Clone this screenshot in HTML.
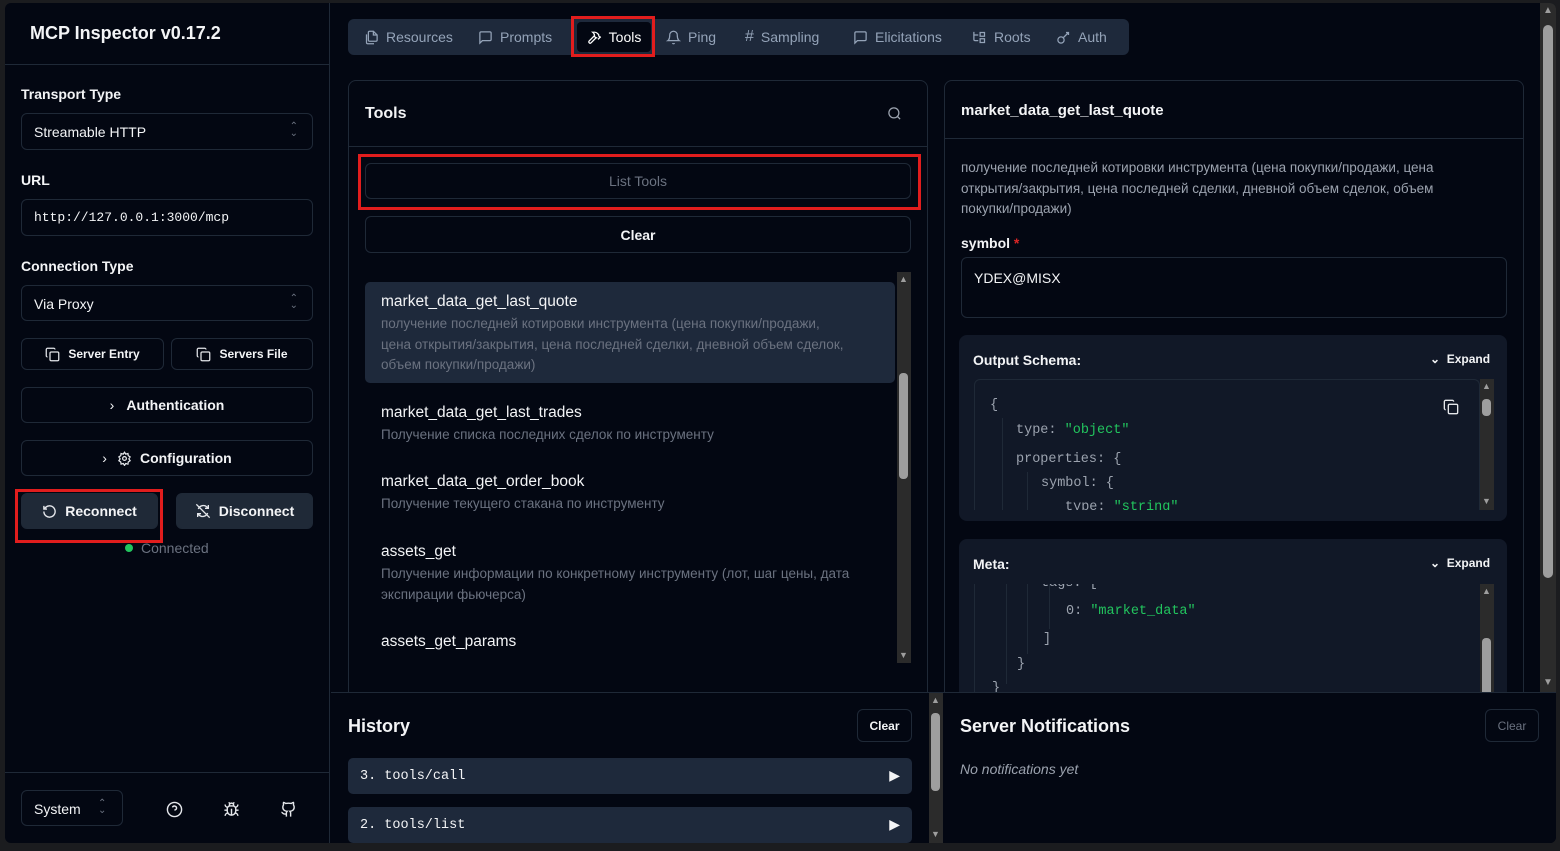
<!DOCTYPE html>
<html><head><meta charset="utf-8"><style>
*{box-sizing:border-box;margin:0;padding:0}
body{width:1560px;height:851px;background:#1b1c1f;font-family:"Liberation Sans","Noto Sans CJK SC",sans-serif;color:#f3f4f6;position:relative;overflow:hidden}
.a{position:absolute}
.app{position:absolute;left:5px;top:3px;width:1551px;height:840px;background:#030712;border-radius:6px;overflow:hidden}
.lbl{font-size:14px;font-weight:bold;color:#f3f4f6}
.box{border:1px solid #1f2937;border-radius:6px}
.btn{border:1px solid #1f2937;border-radius:6px;display:flex;align-items:center;justify-content:center;font-size:13px;font-weight:bold;gap:8px}
.red{border:3px solid #e11d1d}
.mono{font-family:"Liberation Mono",monospace}
.muted{color:#6b7280}
svg{display:block}
.tab{display:flex;align-items:center;gap:7px;font-size:14px;color:#94a3b8;position:absolute;top:0;height:36px}
.tname{font-size:15.5px;color:#f3f4f6}
.tdesc{font-size:13.5px;color:#6b7280;line-height:20.5px;margin-top:3px}
.k{color:#9ca3af}.s{color:#22c55e}
</style></head><body>
<div class="app">
<!-- sidebar -->
<div class="a" style="left:0;top:0;width:325px;height:840px;border-right:1px solid #1f2937"></div>
<div class="a" style="left:25px;top:20px;font-size:18px;font-weight:bold">MCP Inspector v0.17.2</div>
<div class="a" style="left:0;top:61px;width:325px;height:1px;background:#1f2937"></div>
<div class="a lbl" style="left:16px;top:83px">Transport Type</div>
<div class="a box" style="left:16px;top:110px;width:292px;height:37px"><span class="a" style="left:12px;top:10px;font-size:14px">Streamable HTTP</span><span class="a" style="right:14px;top:9px;font-size:10px;color:#6b7280;line-height:7px">⌃<br>⌄</span></div>
<div class="a lbl" style="left:16px;top:169px">URL</div>
<div class="a box" style="left:16px;top:196px;width:292px;height:37px"><span class="a mono" style="left:12px;top:10px;font-size:13px">http://127.0.0.1:3000/mcp</span></div>
<div class="a lbl" style="left:16px;top:255px">Connection Type</div>
<div class="a box" style="left:16px;top:282px;width:292px;height:36px"><span class="a" style="left:12px;top:10px;font-size:14px">Via Proxy</span><span class="a" style="right:14px;top:9px;font-size:10px;color:#6b7280;line-height:7px">⌃<br>⌄</span></div>
<div class="a btn" style="left:16px;top:335px;width:143px;height:32px;font-size:12px"><svg width="15" height="15" viewBox="0 0 24 24" fill="none" stroke="#e5e7eb" stroke-width="2"><rect x="8" y="8" width="14" height="14" rx="2"/><path d="M4 16c-1 0-2-1-2-2V4c0-1 1-2 2-2h10c1 0 2 1 2 2"/></svg>Server Entry</div>
<div class="a btn" style="left:166px;top:335px;width:142px;height:32px;font-size:12px"><svg width="15" height="15" viewBox="0 0 24 24" fill="none" stroke="#e5e7eb" stroke-width="2"><rect x="8" y="8" width="14" height="14" rx="2"/><path d="M4 16c-1 0-2-1-2-2V4c0-1 1-2 2-2h10c1 0 2 1 2 2"/></svg>Servers File</div>
<div class="a btn" style="left:16px;top:384px;width:292px;height:36px;font-size:14px"><span style="font-weight:normal;margin-right:4px">›</span>Authentication</div>
<div class="a btn" style="left:16px;top:437px;width:292px;height:36px;font-size:14px"><span style="font-weight:normal;margin-right:2px">›</span><svg width="15" height="15" viewBox="0 0 24 24" fill="none" stroke="#e5e7eb" stroke-width="2"><circle cx="12" cy="12" r="3"/><path d="M12 2l2 3 3.5-1 .5 3.5 3 2-2 3 2 3-3 2-.5 3.5-3.5-1-2 3-2-3-3.5 1-.5-3.5-3-2 2-3-2-3 3-2 .5-3.5 3.5 1z"/></svg>Configuration</div>
<div class="a btn" style="left:16px;top:490px;width:137px;height:36px;background:#1f2937;border-color:#1f2937;font-size:14px"><svg width="15" height="15" viewBox="0 0 24 24" fill="none" stroke="#e5e7eb" stroke-width="2.2"><path d="M3 12a9 9 0 1 0 3-6.7L3 8"/><path d="M3 3v5h5"/></svg>Reconnect</div>
<div class="a red" style="left:10px;top:486px;width:148px;height:54px"></div>
<div class="a btn" style="left:171px;top:490px;width:137px;height:36px;background:#1f2937;border-color:#1f2937;font-size:14px"><svg width="16" height="16" viewBox="0 0 24 24" fill="none" stroke="#e5e7eb" stroke-width="2"><path d="M2 2l20 20M5 9a8 8 0 0 1 13-3l2 2M19 15a8 8 0 0 1-13 3l-2-2M20 3v5h-5M4 21v-5h5"/></svg>Disconnect</div>
<div class="a" style="left:120px;top:541px;width:8px;height:8px;border-radius:50%;background:#22c55e"></div>
<div class="a" style="left:136px;top:537px;font-size:14px;color:#6b7280">Connected</div>
<div class="a" style="left:0;top:769px;width:325px;height:1px;background:#1f2937"></div>
<div class="a box" style="left:16px;top:787px;width:102px;height:36px"><span class="a" style="left:12px;top:10px;font-size:14px">System</span><span class="a" style="left:76px;top:9px;font-size:10px;color:#6b7280;line-height:7px">⌃<br>⌄</span></div>
<svg class="a" style="left:161px;top:798px" width="17" height="17" viewBox="0 0 24 24" fill="none" stroke="#e5e7eb" stroke-width="2"><circle cx="12" cy="12" r="10"/><path d="M9.1 9a3 3 0 0 1 5.8 1c0 2-3 3-3 3M12 17h.01"/></svg>
<svg class="a" style="left:218px;top:798px" width="17" height="17" viewBox="0 0 24 24" fill="none" stroke="#e5e7eb" stroke-width="2"><path d="M8 2l1.9 1.9M16 2l-1.9 1.9M9 7.1V6a3 3 0 0 1 6 0v1.1"/><path d="M12 20c-3.3 0-6-2.7-6-6v-3a4 4 0 0 1 4-4h4a4 4 0 0 1 4 4v3c0 3.3-2.7 6-6 6zM12 20v-9M6.5 9C4.6 8.8 3 7.1 3 5M6 13H2M3 21c0-2.1 1.7-3.9 3.8-4M20.97 5c0 2.1-1.6 3.8-3.5 4M22 13h-4M17.2 17c2.1.1 3.8 1.9 3.8 4"/></svg>
<svg class="a" style="left:275px;top:798px" width="17" height="17" viewBox="0 0 24 24" fill="none" stroke="#e5e7eb" stroke-width="2"><path d="M15 22v-4a4.8 4.8 0 0 0-1-3.5c3 0 6-2 6-5.5.08-1.25-.27-2.48-1-3.5.28-1.15.28-2.35 0-3.5 0 0-1 0-3 1.5-2.64-.5-5.36-.5-8 0C6 2 5 2 5 2c-.3 1.15-.3 2.35 0 3.5A5.4 5.4 0 0 0 4 9c0 3.5 3 5.5 6 5.5-.39.49-.68 1.05-.85 1.65S8.93 17.38 9 18v4M9 18c-4.51 2-5-2-7-2"/></svg>

<!-- tabs -->
<div class="a" style="left:343px;top:16px;width:781px;height:36px;background:#1e293b;border-radius:6px">
 <div class="tab" style="left:16px"><svg width="15" height="15" viewBox="0 0 24 24" fill="none" stroke="#94a3b8" stroke-width="2"><path d="M15 2H9a2 2 0 0 0-2 2v12a2 2 0 0 0 2 2h10a2 2 0 0 0 2-2V8z"/><path d="M15 2v6h6M4 7v13a2 2 0 0 0 2 2h10"/></svg>Resources</div>
 <div class="tab" style="left:130px"><svg width="15" height="15" viewBox="0 0 24 24" fill="none" stroke="#94a3b8" stroke-width="2"><path d="M21 15a2 2 0 0 1-2 2H7l-4 4V5a2 2 0 0 1 2-2h14a2 2 0 0 1 2 2z"/></svg>Prompts</div>
 <div class="tab" style="left:229px;top:3px;height:30px;width:74px;background:#030712;border-radius:4px;justify-content:center;color:#fff"><svg width="15" height="15" viewBox="0 0 24 24" fill="none" stroke="#fff" stroke-width="2"><path d="M15 12l-8.5 8.5a2.1 2.1 0 0 1-3-3L12 9M17.6 15L22 10.6M20.9 11.7l-1.3-1.3c-.6-.6-.9-1.3-.9-2.1v-.9L16.4 5.2A5.6 5.6 0 0 0 12.4 3.5H9l.9.8A6.2 6.2 0 0 1 12 9v1.3l2 2h2.5"/></svg>Tools</div>
 <div class="tab" style="left:318px"><svg width="15" height="15" viewBox="0 0 24 24" fill="none" stroke="#94a3b8" stroke-width="2"><path d="M6 8a6 6 0 0 1 12 0c0 7 3 9 3 9H3s3-2 3-9M10.3 21a1.9 1.9 0 0 0 3.4 0"/></svg>Ping</div>
 <div class="tab" style="left:397px"><span style="font-size:16px">#</span>Sampling</div>
 <div class="tab" style="left:505px"><svg width="15" height="15" viewBox="0 0 24 24" fill="none" stroke="#94a3b8" stroke-width="2"><path d="M21 15a2 2 0 0 1-2 2H7l-4 4V5a2 2 0 0 1 2-2h14a2 2 0 0 1 2 2z"/></svg>Elicitations</div>
 <div class="tab" style="left:624px"><svg width="15" height="15" viewBox="0 0 24 24" fill="none" stroke="#94a3b8" stroke-width="2"><path d="M3 3v12a2 2 0 0 0 2 2h5M3 8h7M13 4h7v6h-7zM13 14h7v6h-7z"/></svg>Roots</div>
 <div class="tab" style="left:708px"><svg width="15" height="15" viewBox="0 0 24 24" fill="none" stroke="#94a3b8" stroke-width="2"><circle cx="8" cy="16" r="5"/><path d="M12 12l8-8M16 4h4v4"/></svg>Auth</div>
</div>
<div class="a red" style="left:566px;top:13px;width:84px;height:41px"></div>

<!-- tools card -->
<div class="a box" style="left:343px;top:77px;width:580px;height:620px;border-radius:8px"></div>
<div class="a" style="left:360px;top:102px;font-size:16px;font-weight:bold">Tools</div>
<svg class="a" style="left:882px;top:103px" width="15" height="15" viewBox="0 0 24 24" fill="none" stroke="#9ca3af" stroke-width="2"><circle cx="11" cy="11" r="8"/><path d="M21 21l-4.3-4.3"/></svg>
<div class="a" style="left:344px;top:143px;width:578px;height:1px;background:#1f2937"></div>
<div class="a btn" style="left:360px;top:160px;width:546px;height:36px;font-weight:normal;font-size:14px;color:#6b7280">List Tools</div>
<div class="a red" style="left:353px;top:151px;width:563px;height:56px"></div>
<div class="a btn" style="left:360px;top:213px;width:546px;height:37px;font-size:14px">Clear</div>
<div class="a" style="left:360px;top:279px;width:530px;height:101px;background:#1e293b;border-radius:5px"></div>
<div class="a" style="left:376px;top:290px;width:505px">
 <div class="tname">market_data_get_last_quote</div>
 <div class="tdesc">получение последней котировки инструмента (цена покупки/продажи,<br>цена открытия/закрытия, цена последней сделки, дневной объем сделок,<br>объем покупки/продажи)</div>
</div>
<div class="a" style="left:376px;top:401px;width:505px"><div class="tname">market_data_get_last_trades</div><div class="tdesc">Получение списка последних сделок по инструменту</div></div>
<div class="a" style="left:376px;top:470px;width:505px"><div class="tname">market_data_get_order_book</div><div class="tdesc">Получение текущего стакана по инструменту</div></div>
<div class="a" style="left:376px;top:540px;width:505px"><div class="tname">assets_get</div><div class="tdesc">Получение информации по конкретному инструменту (лот, шаг цены, дата экспирации фьючерса)</div></div>
<div class="a" style="left:376px;top:630px;width:505px;height:27px;overflow:hidden"><div class="tname">assets_get_params</div></div>
<div class="a" style="left:892px;top:269px;width:14px;height:391px;background:#2b2b2b"></div>
<div class="a" style="left:894px;top:370px;width:9px;height:106px;background:#9e9e9e;border-radius:4px"></div>
<div class="a" style="left:894px;top:271px;font-size:9px;color:#9e9e9e">▲</div>
<div class="a" style="left:894px;top:647px;font-size:9px;color:#9e9e9e">▼</div>

<!-- right card -->
<div class="a box" style="left:939px;top:77px;width:580px;height:620px;border-radius:8px"></div>
<div class="a" style="left:956px;top:99px;font-size:15px;font-weight:bold">market_data_get_last_quote</div>
<div class="a" style="left:940px;top:135px;width:578px;height:1px;background:#1f2937"></div>
<div class="a" style="left:956px;top:155px;width:520px;font-size:13.5px;line-height:20.5px;color:#9ca3af">получение последней котировки инструмента (цена покупки/продажи, цена открытия/закрытия, цена последней сделки, дневной объем сделок, объем покупки/продажи)</div>
<div class="a" style="left:956px;top:232px;font-size:14px;font-weight:bold">symbol <span style="color:#dc2626">*</span></div>
<div class="a box" style="left:956px;top:254px;width:546px;height:61px"><span class="a" style="left:12px;top:12px;font-size:14px">YDEX@MISX</span></div>
<div class="a" style="left:954px;top:332px;width:548px;height:186px;background:#111827;border-radius:8px"></div>
<div class="a" style="left:968px;top:349px;font-size:14px;font-weight:bold">Output Schema:</div>
<div class="a" style="left:1425px;top:349px;font-size:12px;font-weight:bold">⌄&nbsp; Expand</div>
<div class="a" style="left:969px;top:376px;width:506px;height:131px;border:1px solid #1f2937;border-bottom:none;border-radius:6px 6px 0 0;overflow:hidden;font-family:'Liberation Mono',monospace;font-size:13.5px">
 <div class="a k" style="left:15px;top:18px">{</div>
 <div class="a" style="left:27px;top:38px;width:1px;height:100px;background:#1f2937"></div>
 <div class="a" style="left:41px;top:43px"><span class="k">type:</span> <span class="s">"object"</span></div>
 <div class="a k" style="left:41px;top:72px">properties: {</div>
 <div class="a" style="left:52px;top:92px;width:1px;height:50px;background:#1f2937"></div>
 <div class="a k" style="left:66px;top:96px">symbol: {</div>
 <div class="a" style="left:90px;top:120px"><span class="k">type:</span> <span class="s">"string"</span></div>
</div>
<svg class="a" style="left:1438px;top:396px" width="16" height="16" viewBox="0 0 24 24" fill="none" stroke="#e5e7eb" stroke-width="2"><rect x="8" y="8" width="14" height="14" rx="2"/><path d="M4 16c-1 0-2-1-2-2V4c0-1 1-2 2-2h10c1 0 2 1 2 2"/></svg>
<div class="a" style="left:1475px;top:376px;width:14px;height:131px;background:#2b2b2b"></div>
<div class="a" style="left:1477px;top:396px;width:9px;height:17px;background:#9e9e9e;border-radius:4px"></div>
<div class="a" style="left:1477px;top:378px;font-size:9px;color:#9e9e9e">▲</div>
<div class="a" style="left:1477px;top:493px;font-size:9px;color:#9e9e9e">▼</div>
<div class="a" style="left:954px;top:536px;width:548px;height:160px;background:#111827;border-radius:8px 8px 0 0"></div>
<div class="a" style="left:968px;top:553px;font-size:14px;font-weight:bold">Meta:</div>
<div class="a" style="left:1425px;top:553px;font-size:12px;font-weight:bold">⌄&nbsp; Expand</div>
<div class="a" style="left:969px;top:581px;width:506px;height:108px;overflow:hidden;font-family:'Liberation Mono',monospace;font-size:13.5px;border-left:1px solid #1f2937">
 <div class="a k" style="left:66px;top:-8px">tags: [</div>
 <div class="a" style="left:31px;top:0;width:1px;height:100px;background:#1f2937"></div>
 <div class="a" style="left:52px;top:0;width:1px;height:70px;background:#1f2937"></div>
 <div class="a" style="left:74px;top:0;width:1px;height:45px;background:#1f2937"></div>
 <div class="a" style="left:91px;top:20px"><span class="k">0:</span> <span class="s">"market_data"</span></div>
 <div class="a k" style="left:68px;top:48px">]</div>
 <div class="a k" style="left:42px;top:73px">}</div>
 <div class="a k" style="left:17px;top:97px">}</div>
</div>
<div class="a" style="left:1475px;top:581px;width:14px;height:108px;background:#2b2b2b"></div>
<div class="a" style="left:1477px;top:635px;width:9px;height:60px;background:#9e9e9e;border-radius:4px"></div>
<div class="a" style="left:1477px;top:583px;font-size:9px;color:#9e9e9e">▲</div>

<!-- outer scrollbar -->
<div class="a" style="left:1535px;top:0;width:16px;height:690px;background:#2b2b2b"></div>
<div class="a" style="left:1538px;top:22px;width:10px;height:553px;background:#9e9e9e;border-radius:5px"></div>
<div class="a" style="left:1538px;top:2px;font-size:10px;color:#9e9e9e">▲</div>
<div class="a" style="left:1538px;top:674px;font-size:10px;color:#9e9e9e">▼</div>

<!-- bottom -->
<div class="a" style="left:326px;top:689px;width:1225px;height:151px;background:#030712;border-top:1px solid #1f2937"></div>
<div class="a" style="left:343px;top:713px;font-size:18px;font-weight:bold">History</div>
<div class="a btn" style="left:852px;top:706px;width:55px;height:33px;font-size:12px">Clear</div>
<div class="a mono" style="left:343px;top:755px;width:564px;height:36px;background:#1e293b;border-radius:5px;font-size:13.5px;padding:11px 12px">3. tools/call<span style="position:absolute;right:12px;top:9px;font-family:'Liberation Sans';font-size:14px">▶</span></div>
<div class="a mono" style="left:343px;top:804px;width:564px;height:36px;background:#1e293b;border-radius:5px;font-size:13.5px;padding:11px 12px">2. tools/list<span style="position:absolute;right:12px;top:9px;font-family:'Liberation Sans';font-size:14px">▶</span></div>
<div class="a" style="left:924px;top:690px;width:14px;height:150px;background:#2b2b2b"></div>
<div class="a" style="left:926px;top:710px;width:9px;height:78px;background:#9e9e9e;border-radius:4px"></div>
<div class="a" style="left:926px;top:692px;font-size:9px;color:#9e9e9e">▲</div>
<div class="a" style="left:926px;top:826px;font-size:9px;color:#9e9e9e">▼</div>
<div class="a" style="left:955px;top:713px;font-size:18px;font-weight:bold">Server Notifications</div>
<div class="a btn" style="left:1480px;top:706px;width:54px;height:33px;font-size:12px;color:#6b7280;font-weight:normal">Clear</div>
<div class="a" style="left:955px;top:758px;font-size:14px;font-style:italic;color:#9ca3af">No notifications yet</div>
</div>
</body></html>
